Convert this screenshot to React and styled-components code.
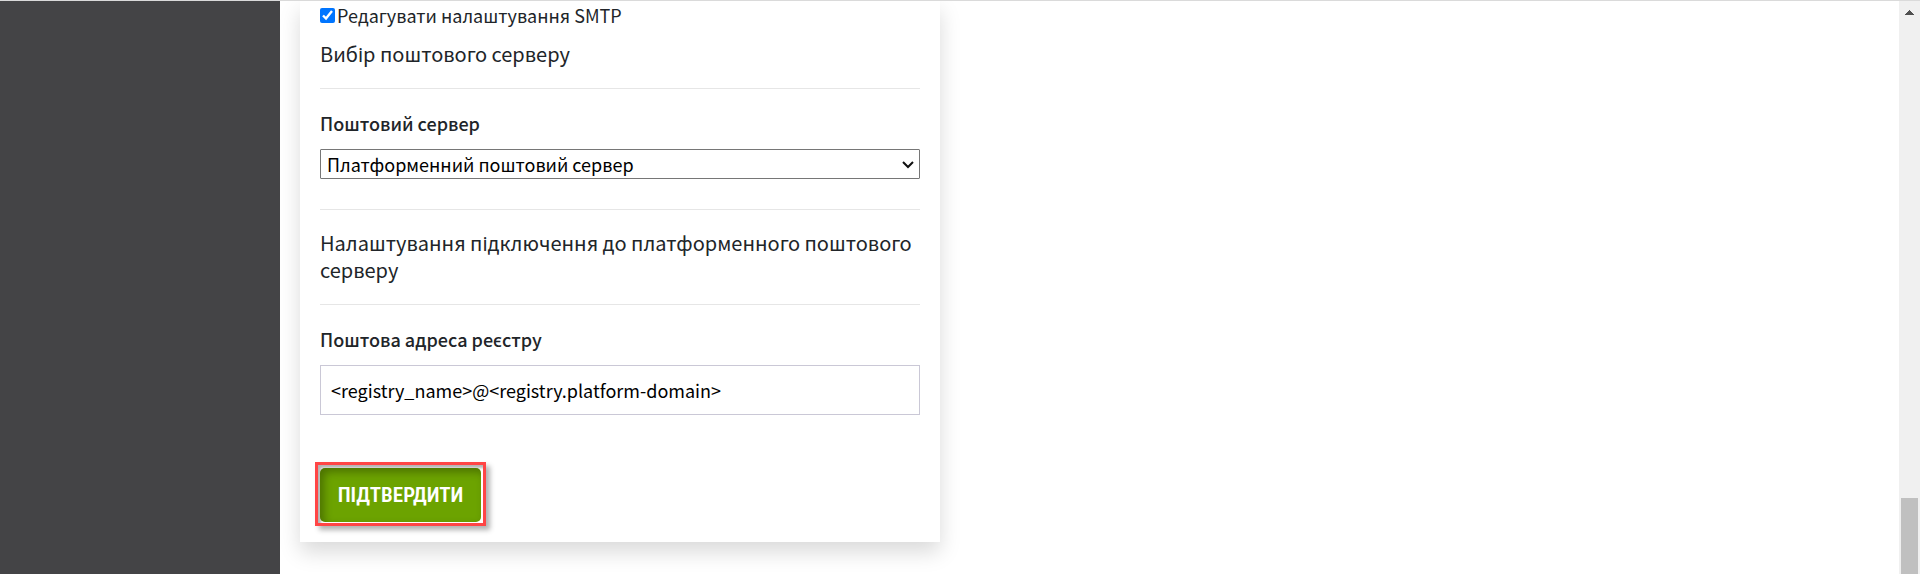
import React from "react";
import styled, { createGlobalStyle } from "styled-components";

const GlobalStyle = createGlobalStyle`
  *, *::before, *::after { box-sizing: border-box; }
  body {
    margin: 0;
    background: #fff;
    color: #212529;
    font-family: "Noto Sans CJK SC", "Noto Sans", sans-serif;
    font-size: 18px;
    line-height: 24px;
  }
`;

const Page = styled.div`
  display: flex;
  min-height: 100vh;
  border-top: 1px solid #dadada;
`;

const Sidebar = styled.aside`
  flex: 0 0 280px;
  background: #444446;
`;

const Main = styled.main`
  flex: 1;
  padding: 0 20px 32px;
  overflow: hidden;
`;

const Card = styled.form`
  max-width: 640px;
  padding: 0 20px 20px;
  background: #fff;
  box-shadow: 0 10px 20px rgba(0, 0, 0, 0.15);
`;

const CheckRow = styled.label`
  display: flex;
  align-items: center;
  gap: 2px;
  height: 28px;
`;

const Checkbox = styled.input`
  width: 15px;
  height: 15px;
  margin: 0;
  accent-color: #0075ff;
`;

const Heading = styled.h2`
  margin: 0;
  padding: ${(p) => (p.$compact ? "11px" : "19px")} 0 21px;
  border-bottom: 1px solid #e6e6e6;
  font-size: 20px;
  font-weight: 400;
  line-height: 27px;
`;

const Field = styled.div`
  display: flex;
  flex-direction: column;
  gap: 14px;
  padding: 22px 0 30px;
  border-bottom: ${(p) => (p.$divided ? "1px solid #e6e6e6" : "0")};
`;

const Label = styled.label`
  font-weight: 500;
`;

const SelectBox = styled.div`
  position: relative;
  display: flex;
`;

const Select = styled.select`
  appearance: none;
  flex: 1;
  height: 30px;
  padding: 0 24px 0 6px;
  border: 1px solid #767676;
  border-radius: 1px;
  background: #fff;
  color: #000;
  font: inherit;
`;

const Chevron = styled.svg`
  position: absolute;
  top: 12px;
  right: 6px;
  pointer-events: none;
`;

const TextInput = styled.input`
  height: 50px;
  padding: 0 10px;
  border: 1px solid #cac8d6;
  color: #000;
  font: inherit;
`;

const Highlight = styled.div`
  width: fit-content;
  margin: 17px -5px -4px;
  padding: 3px 2px 1px;
  border: 3px solid #ff4545;
  background: #fff;
  box-shadow: 4px 4px 5px rgba(0, 0, 0, 0.3), inset 3px 3px 3px rgba(0, 0, 0, 0.3);
`;

const SubmitButton = styled.button`
  display: block;
  min-width: 161px;
  height: 54px;
  padding: 0 16px;
  border: 0;
  border-radius: 5px;
  background: #6ca300;
  box-shadow: inset 4px 4px 8px rgba(0, 0, 0, 0.3);
  color: #fff;
  font-family: "Roboto Condensed", "Open Sans Condensed", "Liberation Sans Narrow", "DejaVu Sans Condensed", sans-serif;
  font-size: 21px;
  font-weight: 600;
`;

const ScrollTrack = styled.div`
  display: flex;
  flex: 0 0 21px;
  flex-direction: column;
  justify-content: space-between;
  align-items: center;
  padding-top: 9px;
  background: #f0f0f0;
`;

const ScrollThumb = styled.div`
  width: 17px;
  height: 76px;
  background: #c0c0c0;
`;

export default function App() {
  return (
    <>
      <GlobalStyle />
      <Page>
        <Sidebar />
        <Main>
          <Card>
            <CheckRow>
              <Checkbox type="checkbox" defaultChecked />
              Редагувати налаштування SMTP
            </CheckRow>
            <Heading $compact>Вибір поштового серверу</Heading>
            <Field $divided>
              <Label htmlFor="server">Поштовий сервер</Label>
              <SelectBox>
                <Select id="server">
                  <option>Платформенний поштовий сервер</option>
                </Select>
                <Chevron width="12" height="8" viewBox="0 0 12 8" aria-hidden="true">
                  <path d="M1 1l5 5 5-5" fill="none" stroke="#101010" strokeWidth="2" />
                </Chevron>
              </SelectBox>
            </Field>
            <Heading>
              Налаштування підключення до платформенного поштового серверу
            </Heading>
            <Field>
              <Label htmlFor="address">Поштова адреса реєстру</Label>
              <TextInput
                id="address"
                type="text"
                defaultValue="<registry_name>@<registry.platform-domain>"
              />
            </Field>
            <Highlight>
              <SubmitButton type="button">ПІДТВЕРДИТИ</SubmitButton>
            </Highlight>
          </Card>
        </Main>
        <ScrollTrack aria-hidden="true">
          <svg width="9" height="5" viewBox="0 0 9 5" shapeRendering="crispEdges">
            <path d="M4 0h1v1h1v1h1v1h1v1h1v1H0V4h1V3h1V2h1V1h1z" fill="#505050" />
          </svg>
          <ScrollThumb />
        </ScrollTrack>
      </Page>
    </>
  );
}
